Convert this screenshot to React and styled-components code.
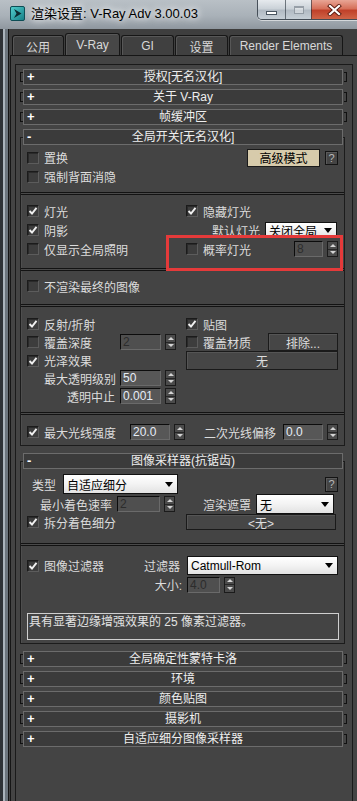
import styled, { createGlobalStyle } from "styled-components";

const GlobalStyle = createGlobalStyle`
  html, body {
    margin: 0;
    padding: 0;
    background: #444;
  }
  body {
    font-family: "Liberation Sans", "Noto Sans CJK SC", sans-serif;
    font-size: 12px;
    color: #dcdcdc;
  }
  * {
    box-sizing: border-box;
  }
`;

function MaxIcon() {
  return (
    <svg width="15" height="15" viewBox="0 0 15 15">
      <defs>
        <linearGradient id="mx" x1="0" y1="0" x2="1" y2="1">
          <stop offset="0" stopColor="#55d0cf" />
          <stop offset="1" stopColor="#137c84" />
        </linearGradient>
      </defs>
      <rect x="0.5" y="0.5" width="14" height="14" rx="1.5" fill="url(#mx)" stroke="#0d4d55" />
      <path d="M4 3 L11.5 7.5 L4 12 L6.5 7.5 Z" fill="#0b2a30" />
    </svg>
  );
}

function CloseX() {
  return (
    <svg width="15" height="12" viewBox="0 0 15 12">
      <path d="M3 2 L12 10 M12 2 L3 10" stroke="#5a1a10" strokeWidth="4" strokeLinecap="square" />
      <path d="M3 2 L12 10 M12 2 L3 10" stroke="#fff" strokeWidth="2.2" strokeLinecap="square" />
    </svg>
  );
}

function CheckMark() {
  return (
    <svg width="10" height="10" viewBox="0 0 10 10">
      <path d="M1.5 5 L4 7.5 L8.5 1.8" fill="none" stroke="#f0f0f0" strokeWidth="1.9" />
    </svg>
  );
}

function Check({ checked, children }) {
  return (
    <CheckWrap>
      <CheckBox>{checked && <CheckMark />}</CheckBox>
      <span>{children}</span>
    </CheckWrap>
  );
}

function Spinner({ value, width, disabled }) {
  return (
    <SpinWrap>
      <SpinField $w={width} $disabled={disabled}>{value}</SpinField>
      <SpinArrows>
        <ArrowHalf>
          <Tri $up />
        </ArrowHalf>
        <ArrowSep />
        <ArrowHalf>
          <Tri />
        </ArrowHalf>
      </SpinArrows>
    </SpinWrap>
  );
}

function Dropdown({ width, height, children }) {
  return (
    <SelectBox $w={width} $h={height}>
      <SelectText>{children}</SelectText>
      <SelectArrow>
        <DownTri />
      </SelectArrow>
    </SelectBox>
  );
}

function Collapsed({ title }) {
  return (
    <CollapsedRoll>
      <Bracket $side="left" />
      <RollHeader>
        <Sign>+</Sign>
        <RollTitle>{title}</RollTitle>
      </RollHeader>
      <Bracket $side="right" />
    </CollapsedRoll>
  );
}

function Open({ title, children }) {
  return (
    <OpenRoll>
      <RollHeader $open>
        <Sign>-</Sign>
        <RollTitle>{title}</RollTitle>
      </RollHeader>
      <RollBody>{children}</RollBody>
    </OpenRoll>
  );
}

export default function App() {
  return (
    <Window>
      <GlobalStyle />
      <TitleBar>
        <IconSlot>
          <MaxIcon />
        </IconSlot>
        <Title>渲染设置: V-Ray Adv 3.00.03</Title>
        <WinButtons>
          <WinBtn $w={27}>
            <MinBar />
          </WinBtn>
          <WinBtn $w={26}>
            <MaxBox />
          </WinBtn>
          <WinBtn $w={46} $close>
            <CloseX />
          </WinBtn>
        </WinButtons>
      </TitleBar>

      <Frame>
        <LeftFrame />
        <Content>
          <TabRow>
            <Tab $w={52}>公用</Tab>
            <Tab $w={55} $active>
              V-Ray
            </Tab>
            <Tab $w={53}>GI</Tab>
            <Tab $w={53}>设置</Tab>
            <Tab $w={114}>Render Elements</Tab>
          </TabRow>

          <TabPage>
            <RolloutArea>
              <Collapsed title="授权[无名汉化]" />
              <Collapsed title="关于 V-Ray" />
              <Collapsed title="帧缓冲区" />

              <Open title="全局开关[无名汉化]">
                <Section $pt={3} $pb={6}>
                  <Row $h={19}>
                    <Cell>
                      <Check>置换</Check>
                    </Cell>
                    <Cell $justify="flex-end" $gap={5}>
                      <Btn $w={73} $h={18} $accent>
                        高级模式
                      </Btn>
                      <QBtn $h={14}>?</QBtn>
                    </Cell>
                  </Row>
                  <Row $h={19}>
                    <Cell>
                      <Check>强制背面消隐</Check>
                    </Cell>
                  </Row>
                </Section>
                <Separator />

                <Section $pt={7} $pb={10} $gap={1}>
                  <Row>
                    <Cell>
                      <Check checked>灯光</Check>
                    </Cell>
                    <Cell>
                      <Check checked>隐藏灯光</Check>
                    </Cell>
                  </Row>
                  <Row>
                    <Cell>
                      <Check checked>阴影</Check>
                    </Cell>
                    <Cell $justify="flex-end" $gap={5} $pr={1}>
                      <span>默认灯光</span>
                      <Dropdown width={72} height={16}>
                        关闭全局
                      </Dropdown>
                    </Cell>
                  </Row>
                  <Row>
                    <Cell>
                      <Check>仅显示全局照明</Check>
                    </Cell>
                    <Cell $justify="space-between">
                      <Check>概率灯光</Check>
                      <Spinner value="8" width={29} disabled />
                    </Cell>
                  </Row>
                  <Highlight />
                </Section>
                <Separator />

                <Section $pt={6} $pb={9}>
                  <Row>
                    <Cell>
                      <Check>不渲染最终的图像</Check>
                    </Cell>
                  </Row>
                </Section>
                <Separator />

                <Section $pt={8} $pb={7}>
                  <Row>
                    <Cell>
                      <Check checked>反射/折射</Check>
                    </Cell>
                    <Cell>
                      <Check checked>贴图</Check>
                    </Cell>
                  </Row>
                  <Row>
                    <Cell>
                      <LabelBox $w={93}>
                        <Check>覆盖深度</Check>
                      </LabelBox>
                      <Spinner value="2" width={41} disabled />
                    </Cell>
                    <Cell $justify="space-between">
                      <Check>覆盖材质</Check>
                      <Btn $w={70} $h={18}>
                        排除...
                      </Btn>
                    </Cell>
                  </Row>
                  <Row>
                    <Cell>
                      <Check checked>光泽效果</Check>
                    </Cell>
                    <Cell>
                      <Btn $w={152} $h={19}>
                        无
                      </Btn>
                    </Cell>
                  </Row>
                  <Row>
                    <Cell>
                      <LabelBox $w={93} $right $pr={4}>
                        最大透明级别
                      </LabelBox>
                      <Spinner value="50" width={41} />
                    </Cell>
                  </Row>
                  <Row>
                    <Cell>
                      <LabelBox $w={93} $right $pr={5}>
                        透明中止
                      </LabelBox>
                      <Spinner value="0.001" width={41} />
                    </Cell>
                  </Row>
                </Section>
                <Separator />

                <Section $pt={8} $pb={4}>
                  <Row>
                    <Cell>
                      <LabelBox $w={103}>
                        <Check checked>最大光线强度</Check>
                      </LabelBox>
                      <Spinner value="20.0" width={40} />
                    </Cell>
                    <Cell $justify="flex-end" $gap={7}>
                      <span>二次光线偏移</span>
                      <Spinner value="0.0" width={40} />
                    </Cell>
                  </Row>
                </Section>
              </Open>

              <Open title="图像采样器(抗锯齿)">
                <Section $pt={5} $pb={12}>
                  <Row $h={20}>
                    <Cell $pl={5} $gap={7}>
                      <span>类型</span>
                      <Dropdown width={115} height={20}>
                        自适应细分
                      </Dropdown>
                    </Cell>
                    <Cell $justify="flex-end">
                      <QBtn $h={15}>?</QBtn>
                    </Cell>
                  </Row>
                  <Row $h={19}>
                    <Cell>
                      <LabelBox $w={90} $right $pr={5}>
                        最小着色速率
                      </LabelBox>
                      <Spinner value="2" width={43} disabled />
                    </Cell>
                    <Cell $pl={17} $gap={5}>
                      <span>渲染遮罩</span>
                      <Dropdown width={78} height={20}>
                        无
                      </Dropdown>
                    </Cell>
                  </Row>
                  <Row>
                    <Cell>
                      <Check checked>拆分着色细分</Check>
                    </Cell>
                    <Cell>
                      <Btn $w={150} $h={16}>
                        &lt;无&gt;
                      </Btn>
                    </Cell>
                  </Row>
                </Section>
                <Separator />

                <Section $pt={9} $pb={3}>
                  <Row $h={21}>
                    <Cell $justify="space-between" $pr={6}>
                      <Check checked>图像过滤器</Check>
                      <span>过滤器</span>
                    </Cell>
                    <Cell $pl={1}>
                      <Dropdown width={151} height={19}>
                        Catmull-Rom
                      </Dropdown>
                    </Cell>
                  </Row>
                  <Row $h={17}>
                    <Cell $justify="flex-end" $pr={4}>
                      <span>大小:</span>
                    </Cell>
                    <Cell $pl={1}>
                      <Spinner value="4.0" width={33} disabled />
                    </Cell>
                  </Row>
                  <Description>具有显著边缘增强效果的 25 像素过滤器。</Description>
                </Section>
              </Open>

              <Collapsed title="全局确定性蒙特卡洛" />
              <Collapsed title="环境" />
              <Collapsed title="颜色贴图" />
              <Collapsed title="摄影机" />
              <Collapsed title="自适应细分图像采样器" />
            </RolloutArea>
          </TabPage>
        </Content>
      </Frame>
    </Window>
  );
}

const Window = styled.div`
  width: 357px;
  height: 801px;
  display: flex;
  flex-direction: column;
  overflow: hidden;
  background: #444;
`;

const TitleBar = styled.div`
  height: 29px;
  flex-shrink: 0;
  display: flex;
  align-items: flex-start;
  background: linear-gradient(180deg, #b9c0c6 0%, #a9b1b8 55%, #8f979f 100%);
`;

const IconSlot = styled.div`
  margin: 6px 0 0 10px;
  width: 15px;
  height: 15px;
`;

const Title = styled.div`
  margin: 5px 0 0 6px;
  font-family: "Liberation Sans", "Noto Sans CJK SC", sans-serif;
  font-size: 13px;
  line-height: 17px;
  color: #000;
  text-shadow: 0 0 6px #fff, 0 0 10px rgba(255, 255, 255, 0.9);
`;

const WinButtons = styled.div`
  margin-left: auto;
  display: flex;
  height: 20px;
  border: 1px solid rgba(35, 45, 55, 0.75);
  border-top: none;
  border-right: none;
  border-radius: 0 0 0 5px;
  overflow: hidden;
  box-shadow: 0 1px 0 rgba(255, 255, 255, 0.55);
`;

const WinBtn = styled.div`
  width: ${(p) => p.$w}px;
  display: flex;
  align-items: center;
  justify-content: center;
  background: ${(p) =>
    p.$close
      ? "linear-gradient(180deg, #e8a595 0%, #d6705a 45%, #c0412a 55%, #cf6447 100%)"
      : "linear-gradient(180deg, #e6eaee 0%, #cbd2d8 45%, #b1bac3 55%, #c6cfd6 100%)"};
  & + & {
    border-left: 1px solid rgba(35, 45, 55, 0.6);
  }
`;

const MinBar = styled.div`
  width: 11px;
  height: 4px;
  margin-top: 6px;
  background: #fff;
  border: 1px solid #4a5661;
`;

const MaxBox = styled.div`
  width: 10px;
  height: 8px;
  border: 1px solid rgba(120, 130, 140, 0.7);
  border-top-width: 2px;
  background: rgba(255, 255, 255, 0.35);
`;

const Frame = styled.div`
  flex: 1;
  display: flex;
  min-height: 0;
`;

const LeftFrame = styled.div`
  width: 9px;
  flex-shrink: 0;
  background: linear-gradient(
    90deg,
    #2e3236 0 3px,
    #aab3bb 3px 5px,
    #6c757d 5px 8px,
    #141414 8px 9px
  );
`;

const Content = styled.div`
  flex: 1;
  display: flex;
  flex-direction: column;
  background: #444;
`;

const TabRow = styled.div`
  height: 26px;
  flex-shrink: 0;
  display: flex;
  align-items: flex-end;
  gap: 1px;
  padding-left: 3px;
  background: #3e3e3e;
`;

const Tab = styled.div`
  width: ${(p) => p.$w}px;
  height: ${(p) => (p.$active ? 22 : 20)}px;
  display: flex;
  align-items: center;
  justify-content: center;
  border: 1px solid #161616;
  border-bottom: none;
  border-radius: 3px 3px 0 0;
  background: ${(p) => (p.$active ? "#474747" : "#404040")};
  box-shadow: inset 1px 1px 0 #575757;
  color: #d8d8d8;
  font-size: 12px;
  padding-top: ${(p) => (p.$active ? 0 : 1)}px;
`;

const TabPage = styled.div`
  flex: 1;
  display: flex;
  flex-direction: column;
  margin-left: 1px;
  border-left: 1px solid #161616;
  border-top: 1px solid #161616;
  padding: 8px 4px 0 4px;
`;

const RolloutArea = styled.div`
  flex: 1;
  display: flex;
  flex-direction: column;
  gap: 4px;
  padding: 4px 0 0 4px;
  border: 1px solid #1a1a1a;
  border-bottom: none;
`;

const CollapsedRoll = styled.div`
  width: 327px;
  display: flex;
  align-items: center;
`;

const Bracket = styled.div`
  width: 3px;
  height: 10px;
  border: 1px solid #111;
  ${(p) =>
    p.$side === "left"
      ? "border-right: none;"
      : "border-left: none; margin-left: 1px;"}
`;

const OpenRoll = styled.div`
  width: 325px;
  margin-bottom: 3px;
`;

const RollHeader = styled.div`
  position: relative;
  z-index: 1;
  width: 320px;
  height: 16px;
  margin-left: ${(p) => (p.$open ? 3 : 0)}px;
  display: grid;
  grid-template-columns: 14px 1fr 14px;
  align-items: center;
  background: #3b3b3b;
  border: 1px solid #6c6c6c;
  color: #eeeeee;
  line-height: 14px;
`;

const Sign = styled.span`
  padding-left: 3px;
  font-weight: bold;
  font-size: 13px;
  color: #fff;
`;

const RollTitle = styled.span`
  text-align: center;
  white-space: nowrap;
`;

const RollBody = styled.div`
  margin-top: -8px;
  padding-top: 7px;
  border: 1px solid #1c1c1c;
  box-shadow: inset 1px 1px 0 #4e4e4e;
`;

const Section = styled.div`
  position: relative;
  display: flex;
  flex-direction: column;
  gap: ${(p) => p.$gap || 0}px;
  padding: ${(p) => p.$pt}px 6px ${(p) => p.$pb}px 6px;
`;

const Separator = styled.div`
  height: 3px;
  border-top: 1px solid #131313;
  border-bottom: 1px solid #131313;
  background: #4a4a4a;
`;

const Row = styled.div`
  display: grid;
  grid-template-columns: 159px 152px;
  height: ${(p) => p.$h || 18}px;
  align-items: center;
`;

const Cell = styled.div`
  display: flex;
  align-items: center;
  justify-content: ${(p) => p.$justify || "flex-start"};
  gap: ${(p) => p.$gap || 0}px;
  padding-left: ${(p) => p.$pl || 0}px;
  padding-right: ${(p) => p.$pr || 0}px;
  white-space: nowrap;
`;

const LabelBox = styled.div`
  width: ${(p) => p.$w}px;
  flex-shrink: 0;
  display: flex;
  justify-content: ${(p) => (p.$right ? "flex-end" : "flex-start")};
  padding-right: ${(p) => p.$pr || 0}px;
`;

const CheckWrap = styled.div`
  display: flex;
  align-items: center;
  gap: 5px;
`;

const CheckBox = styled.div`
  width: 12px;
  height: 12px;
  display: flex;
  align-items: center;
  justify-content: center;
  border: 1px solid;
  border-color: #1b1b1b #5c5c5c #5c5c5c #1b1b1b;
  background: #3d3d3d;
  box-shadow: inset 1px 1px 0 #2a2a2a;
`;

const SpinWrap = styled.div`
  display: flex;
  align-items: center;
  gap: 4px;
`;

const SpinField = styled.div`
  width: ${(p) => p.$w}px;
  height: 16px;
  padding-left: 2px;
  display: flex;
  align-items: center;
  border: 1px solid;
  border-color: #0c0c0c #6a6a6a #6a6a6a #0c0c0c;
  background: ${(p) => (p.$disabled ? "#4f4f4f" : "#575757")};
  color: ${(p) => (p.$disabled ? "#2c2c2c" : "#e6edf6")};
  font-size: 12px;
`;

const SpinArrows = styled.div`
  width: 11px;
  height: 16px;
  display: flex;
  flex-direction: column;
  border: 1px solid #1b1b1b;
  background: #4b4b4b;
`;

const ArrowHalf = styled.div`
  flex: 1;
  display: flex;
  align-items: center;
  justify-content: center;
`;

const ArrowSep = styled.div`
  height: 1px;
  background: #262626;
`;

const Tri = styled.div`
  width: 0;
  height: 0;
  border-left: 3px solid transparent;
  border-right: 3px solid transparent;
  ${(p) =>
    p.$up ? "border-bottom: 3px solid #d4d4d4;" : "border-top: 3px solid #d4d4d4;"}
`;

const SelectBox = styled.div`
  width: ${(p) => p.$w}px;
  height: ${(p) => p.$h}px;
  display: flex;
  align-items: center;
  border: 1px solid #111;
  background: linear-gradient(180deg, #ffffff 0%, #f3f3f3 50%, #e2e2e2 100%);
  color: #000;
`;

const SelectText = styled.div`
  flex: 1;
  padding-left: 3px;
  overflow: hidden;
  white-space: nowrap;
`;

const SelectArrow = styled.div`
  width: 17px;
  height: 100%;
  display: flex;
  align-items: center;
  justify-content: center;
`;

const DownTri = styled.div`
  width: 0;
  height: 0;
  border-left: 4px solid transparent;
  border-right: 4px solid transparent;
  border-top: 5px solid #000;
`;

const Btn = styled.div`
  width: ${(p) => p.$w}px;
  height: ${(p) => p.$h}px;
  display: flex;
  align-items: center;
  justify-content: center;
  border: 1px solid #1a1a1a;
  background: ${(p) => (p.$accent ? "#d7cbab" : "#464646")};
  color: ${(p) => (p.$accent ? "#000" : "#dedede")};
  box-shadow: ${(p) => (p.$accent ? "none" : "inset 1px 1px 0 #555")};
`;

const QBtn = styled.div`
  width: 13px;
  height: ${(p) => p.$h}px;
  display: flex;
  align-items: center;
  justify-content: center;
  border: 1px solid #141414;
  background: #444;
  box-shadow: inset 1px 1px 0 #5a5a5a;
  color: #b8b8b8;
  font-size: 11px;
`;

const Highlight = styled.div`
  position: absolute;
  left: 145px;
  top: 40px;
  width: 177px;
  height: 36px;
  border: 3px solid #e53a3a;
  z-index: 2;
  pointer-events: none;
`;

const Description = styled.div`
  margin-top: 20px;
  width: 312px;
  height: 27px;
  padding: 1px 0 0 1px;
  border: 1px solid #cfcfcf;
  color: #e2e2e2;
  line-height: 14px;
  white-space: nowrap;
`;
